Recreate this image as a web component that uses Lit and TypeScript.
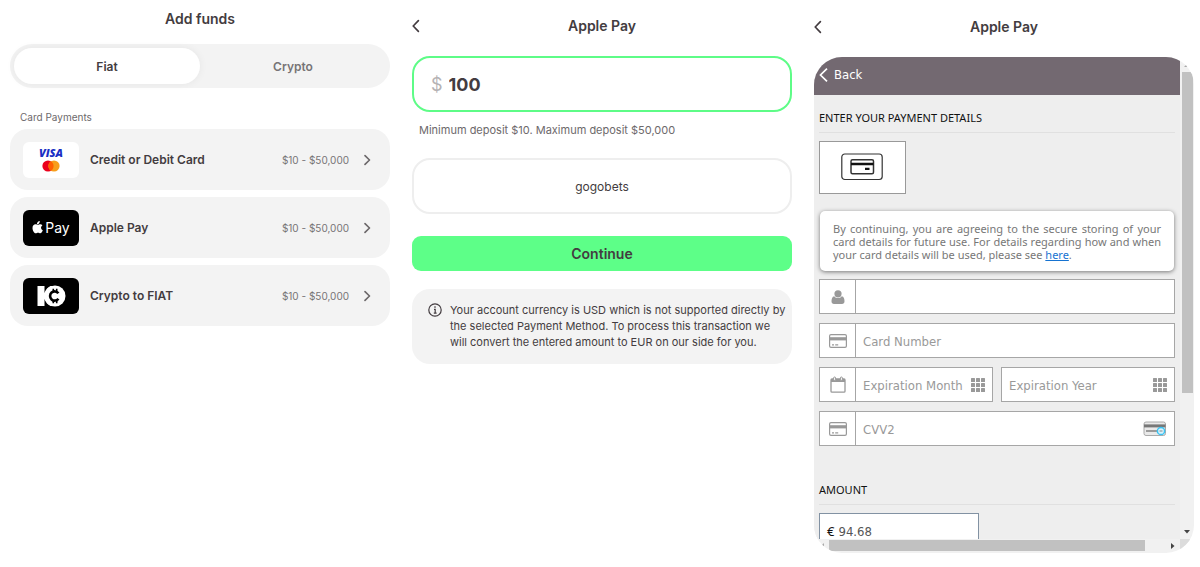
import { LitElement, html, css, svg } from "lit";
import { customElement, state } from "lit/decorators.js";

const chevronLeft = html`<svg width="8" height="14" viewBox="0 0 8 14" fill="none" stroke="currentColor" stroke-width="1.7" stroke-linecap="round" stroke-linejoin="round" aria-hidden="true"><path d="M6.400 1.700 1.200 7l5.200 5.300" /></svg>`;
const chevronRight = html`<svg width="8" height="12" viewBox="0 0 8 12" fill="none" stroke="#6b6769" stroke-width="1.6" stroke-linecap="round" stroke-linejoin="round" aria-hidden="true"><path d="M1 1.600 5.500 6 1 10.400" /></svg>`;

const cardIcon = html`<svg width="18" height="14" viewBox="0 0 18 14" aria-hidden="true"><rect x=".6" y=".6" width="16.8" height="12.8" rx="1.4" fill="#fff" stroke="#999" stroke-width="1.2" /><path d="M1 3.2h16v3.2H1z" fill="#999" /><path d="M3 10.8h2M6.2 10.8h3" stroke="#999" stroke-width="1.2" /></svg>`;
const userIcon = html`<svg width="14" height="14" viewBox="0 0 14 14" fill="#999" aria-hidden="true"><circle cx="7" cy="3.8" r="3.6" /><path d="M3.2 6.2C1.2 6.6.6 8.600.5 11.200.5 13 1.500 14 3 14h8c1.500 0 2.500-1 2.500-2.800 0-2.600-.7-4.600-2.700-5C9.900 7.400 8.500 8.100 7 8.100s-2.900-.7-3.800-1.900z" /></svg>`;
const calendarIcon = html`<svg width="16" height="17" viewBox="0 0 16 17" fill="none" stroke="#999" aria-hidden="true"><rect x="1" y="3" width="14" height="13.200" rx="1" stroke-width="1.300" fill="#fff" /><path d="M1 3h14v3H1z" fill="#999" stroke="none" /><rect x="3.600" y="1" width="2" height="3.400" rx="1" fill="#fff" /><rect x="10.400" y="1" width="2" height="3.400" rx="1" fill="#fff" /></svg>`;
const gridIcon = html`<svg width="14" height="14" viewBox="0 0 14 14" fill="#999" aria-hidden="true">${[0, 5, 10].map((y) => [0, 5, 10].map((x) => svg`<rect x=${x} y=${y} width="4" height="4" rx=".5" />`))}</svg>`;
const cvvIcon = html`<svg width="24" height="16" viewBox="0 0 24 16" aria-hidden="true"><rect x="1" y="1" width="21.500" height="13.500" rx="2" fill="#e9e9e9" stroke="#aaa" /><path d="M1 3.400h21.500v3H1z" fill="#777" /><path d="M3 10h11" stroke="#888" stroke-width="1.600" /><circle cx="18" cy="10" r="3.600" fill="#d8f3fd" stroke="#3cc3f2" stroke-width="1.500" /><path d="M16.500 10h3" stroke="#888" /></svg>`;

const visaMastercard = html`<span class="logo light"><span class="visa">VISA</span><svg width="18" height="12" viewBox="0 0 18 12" aria-hidden="true"><circle cx="6" cy="6" r="5.600" fill="#eb001b" /><circle cx="12" cy="6" r="5.600" fill="#f79e1b" /><path d="M9 1.300a5.600 5.600 0 0 1 0 9.400 5.600 5.600 0 0 1 0-9.400z" fill="#ff5f00" /></svg></span>`;
const applePay = html`<span class="logo dark"><svg width="11" height="13" viewBox="0 0 22 26" fill="#fff" aria-hidden="true"><path d="M15.500 0c.2 2-.6 3.700-1.700 4.900-1.100 1.200-2.500 1.800-3.900 1.700-.2-1.900.6-3.500 1.600-4.700C12.600.7 14.200.1 15.500 0zM20.800 8.900c-1.700 1-2.700 2.500-2.700 4.600 0 2.300 1.300 4.200 3.500 5-.8 2.300-2.900 6-5.200 6.100-1.600 0-2.200-1-4.300-1-2 0-2.800 1-4.400 1C4.900 24.600 1 19.300 1 13.800c0-4.600 3-7.200 6-7.200 2 0 3.500 1.200 4.800 1.200 1.200 0 3-1.300 5.100-1.300 1.500.1 3 .9 3.900 2.400z" /></svg><span class="pay">Pay</span></span>`;
const cryptoFiat = html`<span class="logo dark"><svg width="29" height="22" viewBox="0 0 29 22" aria-hidden="true"><path d="M.5 1h7v7c1.200-3.500 3-5.600 6-7h3v20h-3c-3-1.400-4.800-3.500-6-7v7h-7z" fill="#fff" /><circle cx="18" cy="11" r="10.500" fill="#fff" /><path d="M21.400 8.300a4.600 4.600 0 1 0 0 5.400" fill="none" stroke="#000" stroke-width="2.600" /><path d="M16.300 3.800v3M19.700 3.800v3M16.300 15.200v3M19.700 15.200v3" stroke="#000" stroke-width="1.600" /></svg></span>`;

const methods = [
  { name: "Credit or Debit Card", range: "$10 - $50,000", logo: visaMastercard },
  { name: "Apple Pay", range: "$10 - $50,000", logo: applePay },
  { name: "Crypto to FIAT", range: "$10 - $50,000", logo: cryptoFiat },
];

const base = css`
  * { box-sizing: border-box; }
  :host { display: block; min-width: 0; font-family: Inter, sans-serif; color: #433c40; }
  button, input { font: inherit; color: inherit; margin: 0; padding: 0; border: 0; background: none; }
  button { cursor: pointer; }
  input { outline: none; min-width: 0; }
  h1, h2, p, ul { margin: 0; padding: 0; }
  svg { display: block; flex: none; }
  .bar { display: grid; grid-template-columns: 16px 1fr 16px; align-items: center; height: 20px; }
  .bar button { display: flex; }
  .title { font-size: 14px; line-height: 20px; font-weight: 600; text-align: center; }
`;

@customElement("funds-methods")
export class FundsMethods extends LitElement {
  @state() private tab = "Fiat";

  static styles = [base, css`
    :host { padding-top: 9px; }
    .tabs { display: grid; grid-template-columns: 1fr 1fr; height: 44px; margin-top: 15px; padding: 4px; background: #f3f3f3; border-radius: 22px; }
    .tab { border-radius: 18px; font-size: 12px; font-weight: 600; color: #777476; }
    .tab.on { background: #fff; color: #433c40; box-shadow: 0 0 8px rgba(0, 0, 0, 0.06); }
    .caption { margin: 21px 10px 4px; font-size: 10px; line-height: 16px; font-weight: 400; color: #6d696b; }
    .list { display: grid; gap: 7px; list-style: none; }
    .method { display: flex; align-items: center; width: 100%; height: 61px; padding: 0 18px 0 13px; background: #f3f3f3; border-radius: 18px; text-align: left; }
    .name { flex: 1; margin-left: 11px; font-size: 12px; font-weight: 600; }
    .range { margin-right: 15px; font-size: 10px; color: #777476; }
    .logo { display: flex; align-items: center; justify-content: center; width: 56px; height: 36px; border-radius: 6px; }
    .light { flex-direction: column; gap: 2px; background: #fff; }
    .dark { background: #000; color: #fff; }
    .visa { font: italic 800 11px/11px "Open Sans", sans-serif; color: #1a2fc4; }
    .pay { margin-left: 2px; font-size: 14px; line-height: 16px; }
  `];

  render() {
    return html`
      <h1 class="title">Add funds</h1>
      <div class="tabs">
        ${["Fiat", "Crypto"].map((t) => html`<button class="tab ${t === this.tab ? "on" : ""}" @click=${() => (this.tab = t)}>${t}</button>`)}
      </div>
      <h2 class="caption">Card Payments</h2>
      <ul class="list">
        ${methods.map((m) => html`<li><button class="method">${m.logo}<span class="name">${m.name}</span><span class="range">${m.range}</span>${chevronRight}</button></li>`)}
      </ul>
    `;
  }
}

@customElement("deposit-form")
export class DepositForm extends LitElement {
  static styles = [base, css`
    :host { padding-top: 16px; }
    .box { display: flex; align-items: center; width: 100%; height: 56px; border: 2px solid #eee; border-radius: 18px; }
    .amount { margin-top: 20px; padding: 0 17px; border-color: #5efc87; font-size: 18px; }
    .amount span { color: #b5b2b4; }
    .amount input { flex: 1; margin-left: 6px; font-weight: 700; }
    .hint { margin: 10px 7px 20px; font-size: 11px; line-height: 16px; color: #6d696b; }
    .option { justify-content: center; font-size: 12px; }
    .continue { width: 100%; height: 35px; margin-top: 22px; border-radius: 9px; background: #5dff88; font-size: 14px; font-weight: 600; }
    .info { display: flex; gap: 8px; margin-top: 18px; padding: 13px 4px 14px 16px; border-radius: 18px; background: #f3f3f3; font-size: 11px; line-height: 16px; }
    .info svg { margin-top: 1px; }
  `];

  render() {
    return html`
      <header class="bar"><button aria-label="Go back">${chevronLeft}</button><h1 class="title">Apple Pay</h1></header>
      <label class="box amount"><span>$</span><input aria-label="Deposit amount" .value=${"100"} /></label>
      <p class="hint">Minimum deposit $10. Maximum deposit $50,000</p>
      <button class="box option">gogobets</button>
      <button class="continue">Continue</button>
      <div class="info">
        <svg width="14" height="14" viewBox="0 0 14 14" fill="none" stroke="#433c40" stroke-width="1.200" aria-hidden="true"><circle cx="7" cy="7" r="6.200" /><path d="M6 6.300h1.200v3.900M5.800 10.200h2.800" /><circle cx="7" cy="4" r=".5" fill="#433c40" stroke-width=".6" /></svg>
        <p>Your account currency is USD which is not supported directly by the selected Payment Method. To process this transaction we will convert the entered amount to EUR on our side for you.</p>
      </div>
    `;
  }
}

@customElement("card-checkout")
export class CardCheckout extends LitElement {
  static styles = [base, css`
    :host { display: flex; flex-direction: column; padding: 17px 0 14px; }
    .frame { flex: 1; min-height: 0; display: grid; grid-template: minmax(0, 1fr) 14px / minmax(0, 1fr) 14px; margin-top: 20px; border-radius: 28px; overflow: hidden; background: #f1f1f1; }
    .view { overflow: hidden; background: #eee; font-family: "Noto Sans", sans-serif; }
    .head { display: flex; align-items: center; height: 38px; padding: 0 5px 2px; background: #736971; }
    .back { display: flex; align-items: center; gap: 6px; color: #fff; font-family: "DejaVu Sans Condensed", "Noto Sans", sans-serif; font-size: 13px; line-height: 18px; }
    .body { padding: 0 5px; }
    .section { padding: 14px 0 5px; border-bottom: 1px solid #e0e0e0; font-size: 11px; line-height: 18px; font-weight: 400; color: #111; }
    .type { display: flex; align-items: center; justify-content: center; width: 87px; height: 53px; margin-top: 8px; padding: 0 2px 2px 0; border: 1px solid #999; background: #fff; }
    .notice { margin: 17px 1px 8px; padding: 11px 13px 10px; border-radius: 5px; background: #fff; box-shadow: 0 1px 4px rgba(0, 0, 0, 0.5); font-size: 11px; line-height: 13px; text-align: justify; color: #777; }
    .notice a { color: #1673d1; }
    .fields { display: grid; grid-template-columns: minmax(0, 1fr); gap: 9px; margin-bottom: 21px; }
    .pair { display: grid; grid-template-columns: repeat(2, minmax(0, 1fr)); gap: 8px; }
    .field { display: flex; align-items: center; height: 35px; border: 1px solid #a6a6a6; background: #fff; padding-right: 7px; }
    .icon { display: flex; align-items: center; justify-content: center; width: 36px; height: 100%; border-right: 1px solid #a6a6a6; flex: none; }
    .field input { flex: 1; height: 100%; padding: 2px 0 0 7px; font-family: "DejaVu Sans Condensed", "Noto Sans", sans-serif; font-size: 13px; color: #555; }
    .field input::placeholder { color: #999; opacity: 1; }
    .sum { width: 160px; margin-top: 8px; padding-left: 7px; border-color: #8292a3; font-size: 13px; color: #111; }
    .field.sum input { padding-left: 4px; }
    .vbar, .hbar { display: flex; }
    .vbar { flex-direction: column; }
    .arrow { flex: none; display: flex; align-items: center; justify-content: center; width: 15px; height: 14px; }
    .vbar .arrow { width: 14px; height: 15px; }
    .track { flex: 1; min-width: 0; min-height: 0; }
    .thumb { background: #c1c1c1; }
    .vbar .thumb { width: 11px; height: 71%; margin-left: 2px; }
    .hbar .thumb { width: 94%; height: 11px; margin-top: 1px; }
    .corner { background: #dcdcdc; }
  `];

  private arrow(d: string, color: string) {
    return html`<span class="arrow"><svg width="6" height="6" viewBox="0 0 6 6" fill=${color} aria-hidden="true"><path d=${d} /></svg></span>`;
  }

  private field(label: string, icon: unknown, end: unknown = "") {
    return html`<label class="field">${icon ? html`<span class="icon">${icon}</span>` : ""}<input aria-label=${label || "Cardholder name"} placeholder=${label} />${end}</label>`;
  }

  render() {
    return html`
      <header class="bar"><button aria-label="Go back">${chevronLeft}</button><h1 class="title">Apple Pay</h1></header>
      <div class="frame">
        <div class="view">
          <div class="head"><button class="back"><svg width="9" height="14" viewBox="0 0 9 14" fill="none" stroke="#fff" stroke-width="1.700" aria-hidden="true"><path d="M8 .7 1.500 7 8 13.300" /></svg>Back</button></div>
          <div class="body">
            <h2 class="section">ENTER YOUR PAYMENT DETAILS</h2>
            <button class="type" aria-label="Card">
              <svg width="42" height="28" viewBox="0 0 42 28" fill="none" stroke="#333" aria-hidden="true"><rect x=".8" y="1" width="40.400" height="25.500" rx="3" stroke-width="1.200" /><rect x="10" y="6.800" width="22.500" height="14" rx="1.500" stroke-width="1.500" /><path d="M10 11h22.500" stroke="#111" stroke-width="2.400" /><path d="M24 15.800h4.500" stroke="#111" stroke-width="2.200" /></svg>
            </button>
            <p class="notice">By continuing, you are agreeing to the secure storing of your card details for future use. For details regarding how and when your card details will be used, please see <a href="#">here</a>.</p>
            <div class="fields">
              ${this.field("", userIcon)}
              ${this.field("Card Number", cardIcon)}
              <div class="pair">${this.field("Expiration Month", calendarIcon, gridIcon)}${this.field("Expiration Year", "", gridIcon)}</div>
              ${this.field("CVV2", cardIcon, cvvIcon)}
            </div>
            <h2 class="section">AMOUNT</h2>
            <label class="field sum">€<input aria-label="Amount in euro" .value=${"94.68"} /></label>
          </div>
        </div>
        <div class="vbar">${this.arrow("M0 5h6L3 2z", "#aaa")}<div class="track"><div class="thumb"></div></div>${this.arrow("M0 1h6L3 4.500z", "#444")}</div>
        <div class="hbar">${this.arrow("M5 0v6L2 3z", "#aaa")}<div class="track"><div class="thumb"></div></div>${this.arrow("M1 0v6l3.500-3z", "#444")}</div>
        <div class="corner"></div>
      </div>
    `;
  }
}

@customElement("app-root")
export class AppRoot extends LitElement {
  static styles = css`
    :host { display: block; background: #fff; }
    .page { display: grid; grid-template-columns: repeat(3, minmax(0, 1fr)); grid-template-rows: minmax(0, 1fr); gap: 22px; height: 100vh; padding: 0 6px 0 10px; box-sizing: border-box; }
  `;

  render() {
    return html`<main class="page"><funds-methods></funds-methods><deposit-form></deposit-form><card-checkout></card-checkout></main>`;
  }
}
